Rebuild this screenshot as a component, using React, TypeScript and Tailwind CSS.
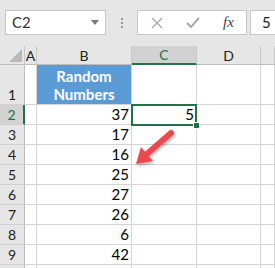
import type { ReactNode } from "react";

const numbers = [37, 17, 16, 25, 27, 26, 6, 42];

/* ------------------------------ cells ------------------------------ */

function ColHead({ children, active }: { children?: ReactNode; active?: boolean }) {
  return (
    <div
      className={
        active
          ? "flex items-center justify-center border-r border-r-[#c8c8c8] border-b-2 border-b-[#217346] bg-[#d2d2d2] text-[14px] text-[#217346]"
          : "flex items-center justify-center border-r border-b border-r-[#c8c8c8] border-b-[#bdbdbd] bg-[#e6e6e6] text-[14px] text-[#222]"
      }
    >
      {children}
    </div>
  );
}

function RowHead({ n, active }: { n?: number; active?: boolean }) {
  return (
    <div
      className={
        active
          ? "flex items-end justify-center border-r-2 border-r-[#217346] border-b border-b-[#d0d0d0] bg-[#d2d2d2] pb-[1px] text-[14px] leading-[17px] text-[#217346]"
          : "flex items-end justify-center border-r border-b border-r-[#bdbdbd] border-b-[#d0d0d0] bg-[#e6e6e6] pb-[1px] text-[14px] leading-[17px] text-[#222]"
      }
    >
      {n}
    </div>
  );
}

function Cell({ children }: { children?: ReactNode }) {
  return (
    <div className="flex items-end justify-end border-r border-b border-[#d4d4d4] bg-white pr-[2px] pb-[1px] text-[15px] leading-[17px] text-black">
      {children}
    </div>
  );
}

/* ------------------------------ App ------------------------------ */

export default function App() {
  return (
    <div className="relative h-[268px] w-[275px] overflow-hidden bg-white font-['Lato','Liberation_Sans',sans-serif]">
      {/* formula bar */}
      <div className="flex h-[46px] items-start bg-[#e6e6e6] pt-[10px]">
        <div className="ml-[5px] flex h-[25px] w-[101px] items-center justify-between border border-[#c6c6c6] bg-white pr-[6px] pl-[6px]">
          <span className="text-[15px] text-[#333]">C2</span>
          <svg width="8" height="5" viewBox="0 0 8 5">
            <polygon points="0,0 8,0 4,5" fill="#777" />
          </svg>
        </div>
        <div className="flex h-[25px] w-[31px] flex-col items-center justify-center gap-[2px]">
          <span className="h-[2px] w-[2px] bg-[#999]" />
          <span className="h-[2px] w-[2px] bg-[#999]" />
          <span className="h-[2px] w-[2px] bg-[#999]" />
        </div>
        <div className="flex h-[25px] w-[110px] items-center border border-[#c6c6c6] bg-white">
          <svg className="ml-[13px]" width="12" height="12" viewBox="0 0 12 12">
            <path d="M1 1 L11 11 M11 1 L1 11" stroke="#a8a8a8" strokeWidth="1.4" />
          </svg>
          <svg className="ml-[23px]" width="14" height="11" viewBox="0 0 14 11">
            <path d="M1 6 L5 10 L13 1" stroke="#a8a8a8" strokeWidth="2" fill="none" />
          </svg>
          <span className="ml-[23px] font-['Liberation_Serif',serif] text-[15px] italic text-[#444]">
            fx
          </span>
        </div>
        <div className="ml-[3px] flex h-[25px] flex-1 items-center border border-r-0 border-[#c6c6c6] bg-white pl-[11px]">
          <span className="text-[15px] text-[#222]">5</span>
        </div>
      </div>

      {/* sheet */}
      <div className="grid grid-cols-[25px_12px_95px_65px_64px_1fr] grid-rows-[19px_40px_repeat(9,20px)]">
        <div className="relative border-r border-b border-r-[#c8c8c8] border-b-[#bdbdbd] bg-[#e6e6e6]">
          <svg className="absolute right-[2px] bottom-[2px]" width="13" height="13" viewBox="0 0 13 13">
            <polygon points="13,0 13,13 0,13" fill="#b8b8b8" />
          </svg>
        </div>
        <ColHead>A</ColHead>
        <ColHead>B</ColHead>
        <ColHead active>C</ColHead>
        <ColHead>D</ColHead>
        <ColHead />

        <RowHead n={1} />
        <Cell />
        <div className="flex flex-col items-center justify-center border-r border-b border-[#d4d4d4] bg-[#5b9bd5] text-[15px] leading-[18px] font-bold text-white">
          <span>Random</span>
          <span>Numbers</span>
        </div>
        <Cell />
        <Cell />
        <Cell />

        {numbers.map((v, i) => (
          <div key={i} className="contents">
            <RowHead n={i + 2} active={i === 0} />
            <Cell />
            <Cell>{v}</Cell>
            <Cell>{i === 0 ? 5 : null}</Cell>
            <Cell />
            <Cell />
          </div>
        ))}

        <RowHead />
        <Cell />
        <Cell />
        <Cell />
        <Cell />
        <Cell />
      </div>

      {/* active cell */}
      <div className="absolute top-[104px] left-[131px] h-[22px] w-[66px] border-2 border-[#217346]" />
      <div className="absolute top-[122px] left-[193px] h-[7px] w-[7px] border border-white bg-[#217346]" />

      {/* arrow */}
      <svg className="pointer-events-none absolute top-0 left-0" width="275" height="268" viewBox="0 0 275 268">
        <defs>
          <filter id="sh" x="-50%" y="-50%" width="200%" height="200%">
            <feDropShadow dx="1" dy="2" stdDeviation="1.5" floodColor="#000" floodOpacity="0.3" />
          </filter>
        </defs>
        <g filter="url(#sh)">
          <line x1="171" y1="133" x2="148" y2="153" stroke="#ea4a50" strokeWidth="6" strokeLinecap="round" />
          <polygon points="136,164 141,147 153,161" fill="#ea4a50" />
        </g>
      </svg>
    </div>
  );
}
